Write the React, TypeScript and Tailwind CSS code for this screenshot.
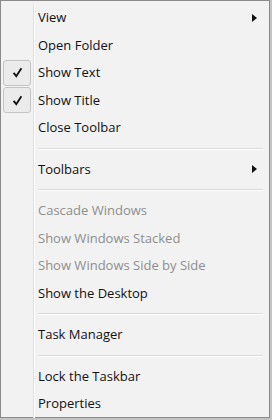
import React from "react";

type Item =
  | { kind: "item"; label: string; checked?: boolean; disabled?: boolean; submenu?: boolean }
  | { kind: "sep" };

const items: Item[] = [
  { kind: "item", label: "View", submenu: true },
  { kind: "item", label: "Open Folder" },
  { kind: "item", label: "Show Text", checked: true },
  { kind: "item", label: "Show Title", checked: true },
  { kind: "item", label: "Close Toolbar" },
  { kind: "sep" },
  { kind: "item", label: "Toolbars", submenu: true },
  { kind: "sep" },
  { kind: "item", label: "Cascade Windows", disabled: true },
  { kind: "item", label: "Show Windows Stacked", disabled: true },
  { kind: "item", label: "Show Windows Side by Side", disabled: true },
  { kind: "item", label: "Show the Desktop" },
  { kind: "sep" },
  { kind: "item", label: "Task Manager" },
  { kind: "sep" },
  { kind: "item", label: "Lock the Taskbar" },
  { kind: "item", label: "Properties" },
];

function CheckBox() {
  return (
    <div className="ml-[2px] flex h-[26px] w-[28px] items-center justify-center rounded-[3px] border border-[#c4c4c4] bg-[#ebebeb]">
      <svg width="11" height="11" viewBox="0 0 11 11">
        <path d="M1.6 5.8 L4.3 9.2 L9.4 1.3" fill="none" stroke="#151515" strokeWidth="1.9" />
      </svg>
    </div>
  );
}

function Row({ item }: { item: Item }) {
  const gutter = (children?: React.ReactNode) => (
    <>
      <div className="flex w-[32px] shrink-0 items-center">{children}</div>
      <div className="w-px shrink-0 bg-[#e0e0e0]" />
      <div className="w-px shrink-0 bg-white" />
    </>
  );

  if (item.kind === "sep") {
    return (
      <div className="flex h-[14px]">
        {gutter()}
        <div className="flex flex-1 flex-col justify-center pl-[3px] pr-[6px]">
          <div className="h-px bg-[#dadada]" />
          <div className="h-px bg-white" />
        </div>
      </div>
    );
  }

  return (
    <div className="flex h-[27.5px]">
      {gutter(item.checked ? <CheckBox /> : null)}
      <div
        className={`flex flex-1 items-center pl-[3px] pr-[12px] text-[13px] ${
          item.disabled ? "text-[#8e8e8e]" : "text-[#111111]"
        }`}
      >
        <span className="flex-1 whitespace-nowrap">{item.label}</span>
        {item.submenu && (
          <svg width="5" height="8" viewBox="0 0 5 8">
            <path d="M0 0 L5 4 L0 8 Z" fill="#111" />
          </svg>
        )}
      </div>
    </div>
  );
}

export default function App() {
  return (
    <div className="h-[420px] w-[272px] bg-[#c4c4c4]" style={{ fontFamily: '"Open Sans", "Noto Sans", sans-serif' }}>
      <div className="h-[418px] w-[270px] border border-[#8a8a8a] bg-[#f2f2f2] pt-[3px]">
        {items.map((item, i) => (
          <Row key={i} item={item} />
        ))}
      </div>
    </div>
  );
}
